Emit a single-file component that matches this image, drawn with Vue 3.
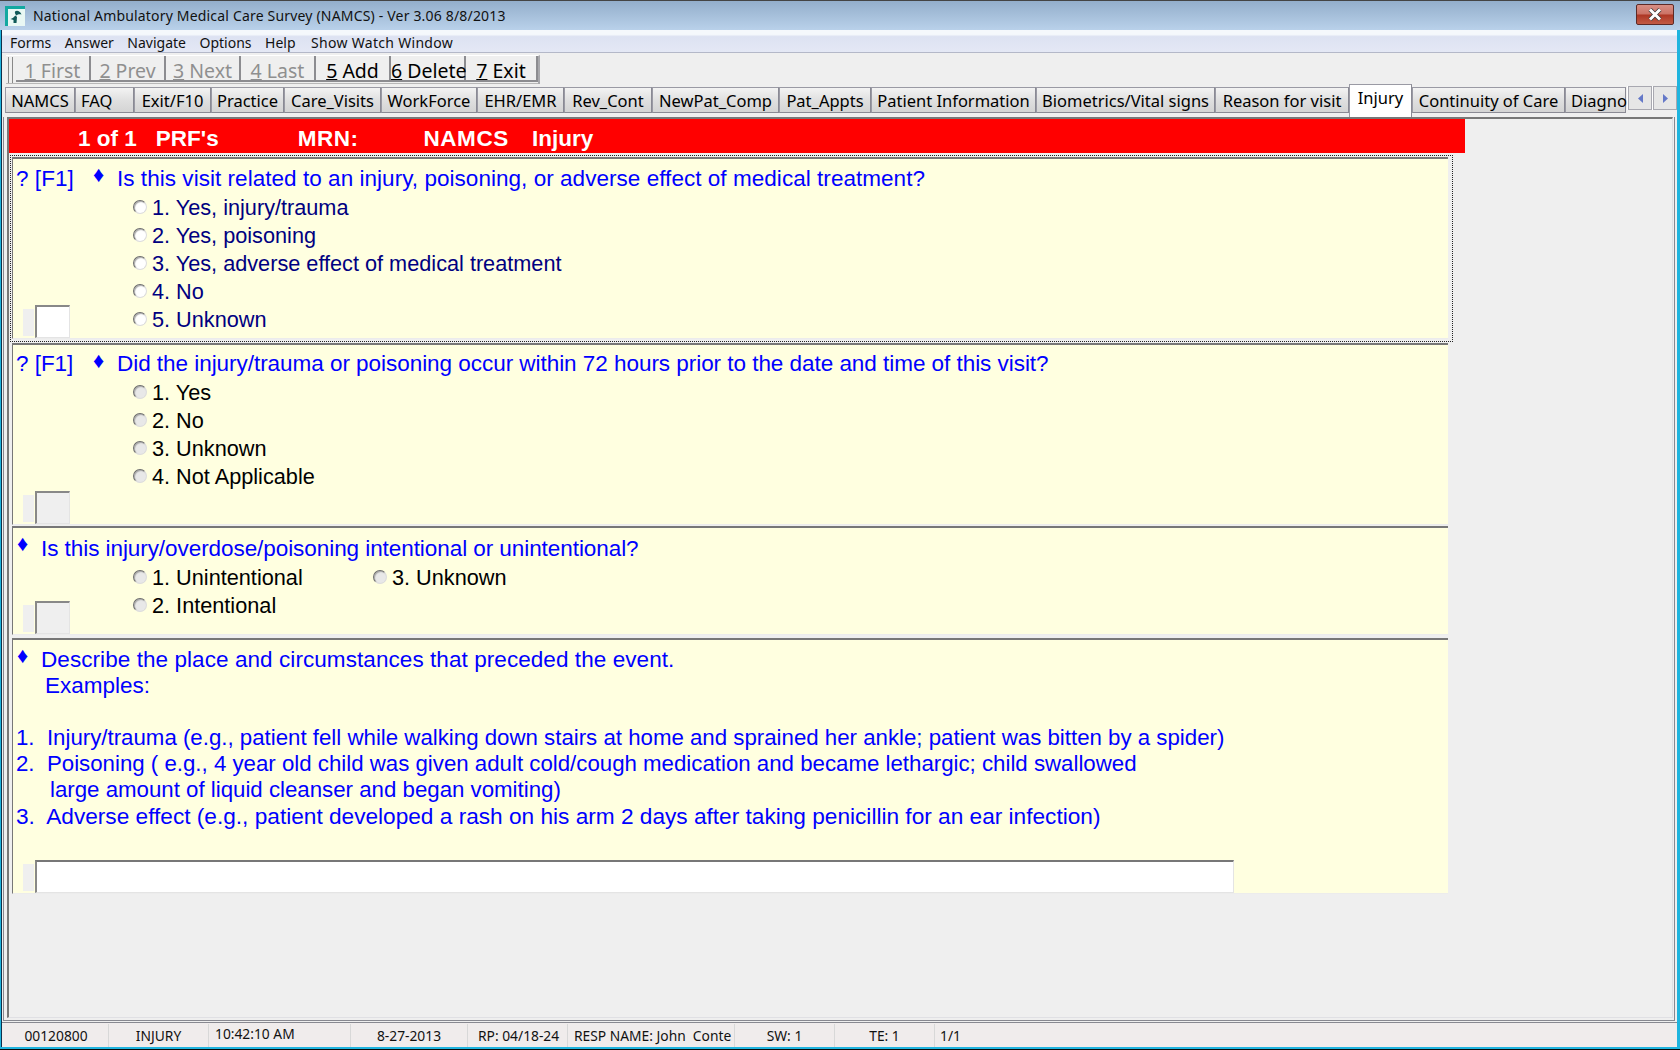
<script setup>
const menus = ['Forms', 'Answer', 'Navigate', 'Options', 'Help', 'Show Watch Window']
const tools = [
  { k: '1', t: ' First', off: true }, { k: '2', t: ' Prev', off: true },
  { k: '3', t: ' Next', off: true }, { k: '4', t: ' Last', off: true },
  { k: '5', t: ' Add' }, { k: '6', t: ' Delete', left: true }, { k: '7', t: ' Exit' },
]
const tabs = [
  ['NAMCS', 70], ['FAQ', 59], ['Exit/F10', 77], ['Practice', 73], ['Care_Visits', 97], ['WorkForce', 96],
  ['EHR/EMR', 87], ['Rev_Cont', 88], ['NewPat_Comp', 127], ['Pat_Appts', 92], ['Patient Information', 165],
  ['Biometrics/Vital signs', 179], ['Reason for visit', 134], ['Injury', 63], ['Continuity of Care', 153], ['Diagno', 61],
]
const status = [
  ['00120800', 105, 'c', 0], ['INJURY', 100, 'c', 0], ['10:42:10 AM', 142, 'up', 6], ['8-27-2013', 117, 'c', 0],
  ['RP: 04/18-24', 100, '', 10], ['RESP NAME: John  Conte', 167, '', 6], ['SW: 1', 100, 'c', 0], ['TE: 1', 100, 'c', 0], ['1/1', 200, '', 5],
]
const q1 = ['1. Yes, injury/trauma', '2. Yes, poisoning', '3. Yes, adverse effect of medical treatment', '4. No', '5. Unknown']
const q2 = ['1. Yes', '2. No', '3. Unknown', '4. Not Applicable']
</script>

<template>
  <div class="win">
    <header class="title">
      <svg class="logo" width="20" height="20" viewBox="0 0 20 20">
        <rect width="20" height="20" fill="#12a8a0" />
        <path d="M3 3H20V20H3Z" fill="#e9f8f4" />
        <path d="M10 5.500C12 4 15 5 16.500 8.500C14.500 8 12.500 8.500 11.500 9.500C10.500 8.500 9.500 7 10 5.500Z" fill="#0f5a58" />
        <path d="M10.500 9.500L12 11L11.500 17H8.500V14C7.500 13.800 6.500 13.500 5.500 13C7.500 12.500 9 11 10.500 9.500Z" fill="#0f5a58" />
      </svg>
      <span class="title-text">National Ambulatory Medical Care Survey (NAMCS) - Ver 3.06 8/8/2013</span>
      <button class="close">
        <svg width="16" height="13" viewBox="0 0 16 13"><path d="M3 1.500L13 11.500M13 1.500L3 11.500" stroke="#3a3a3a" stroke-width="4.400" /><path d="M3 1.500L13 11.500M13 1.500L3 11.500" stroke="#fff" stroke-width="3" /></svg>
      </button>
    </header>

    <div class="body">
      <nav class="menu"><span v-for="m in menus" :key="m">{{ m }}</span></nav>

      <div class="toolbar">
        <div class="tools">
          <span class="grip"></span>
          <span v-for="b in tools" :key="b.k" class="tool" :class="{ off: b.off, left: b.left }"><u>{{ b.k }}</u>{{ b.t }}</span>
        </div>
      </div>

      <div class="tabrow">
        <div class="tabs">
          <span v-for="t in tabs" :key="t[0]" class="tab" :class="{ active: t[0] === 'Injury', start: t[0] === 'FAQ' || t[0] === 'Diagno' }" :style="{ width: t[1] + 'px' }">{{ t[0] }}</span>
        </div>
        <div class="scrollers">
          <span class="scr"><svg width="7" height="9" viewBox="0 0 7 9"><path d="M6 0V9L1 4.500Z" fill="#6478c8" /></svg></span>
          <span class="scr"><svg width="7" height="9" viewBox="0 0 7 9"><path d="M1 0V9L6 4.500Z" fill="#6478c8" /></svg></span>
        </div>
      </div>

      <main class="panel">
        <div class="inner">
          <div class="red">
            <span class="r1">1 of 1</span><span class="r2">PRF's</span><span class="r3">MRN:</span><span class="r4">NAMCS</span><span class="r5">Injury</span>
          </div>

          <section class="focus">
            <div class="q q1">
              <div class="head"><span class="f1">? [F1]</span><span class="dia">♦</span><span class="qt">Is this visit related to an injury, poisoning, or adverse effect of medical treatment?</span></div>
              <div class="qbody">
                <div class="inp"><i></i><b></b></div>
                <div class="opts navy">
                  <label v-for="o in q1" :key="o"><em class="radio"></em>{{ o }}</label>
                </div>
              </div>
            </div>
          </section>

          <section class="q q2">
            <div class="head"><span class="f1">? [F1]</span><span class="dia">♦</span><span class="qt">Did the injury/trauma or poisoning occur within 72 hours prior to the date and time of this visit?</span></div>
            <div class="qbody">
              <div class="inp dis"><i></i><b></b></div>
              <div class="opts">
                <label v-for="o in q2" :key="o"><em class="radio dis"></em>{{ o }}</label>
              </div>
            </div>
          </section>

          <section class="q q3">
            <div class="head nof"><span class="dia">♦</span><span class="qt">Is this injury/overdose/poisoning intentional or unintentional?</span></div>
            <div class="qbody">
              <div class="inp dis"><i></i><b></b></div>
              <div class="opts two">
                <label><em class="radio dis"></em>1. Unintentional</label>
                <label><em class="radio dis"></em>3. Unknown</label>
                <label><em class="radio dis"></em>2. Intentional</label>
              </div>
            </div>
          </section>

          <section class="q q4">
            <div class="head nof"><span class="dia">♦</span><span class="qt">Describe the place and circumstances that preceded the event.</span></div>
            <div class="desc">
              <p class="ex">Examples:</p>
              <p class="n1">1.&nbsp; Injury/trauma (e.g., patient fell while walking down stairs at home and sprained her ankle; patient was bitten by a spider)</p>
              <p>2.&nbsp; Poisoning ( e.g., 4 year old child was given adult cold/cough medication and became lethargic; child swallowed</p>
              <p class="cont">large amount of liquid cleanser and began vomiting)</p>
              <p class="n3">3.&nbsp; Adverse effect (e.g., patient developed a rash on his arm 2 days after taking penicillin for an ear infection)</p>
            </div>
            <div class="wide"><i></i><b></b></div>
          </section>
        </div>
      </main>

      <footer class="status">
        <span v-for="s in status" :key="s[0]" class="cell" :class="s[2]" :style="{ width: s[1] + 'px', paddingLeft: s[3] + 'px' }">{{ s[0] }}</span>
      </footer>
    </div>
  </div>
</template>

<style>
html, body { margin: 0; background: #efefef; overflow: hidden; }
</style>

<style scoped>
.win { width: 1680px; height: 1050px; display: flex; flex-direction: column; box-sizing: border-box; background: #1fb4de; border-bottom: 1px solid #0a0a0a; overflow: hidden; font-family: "Noto Sans", sans-serif; color: #000; }
.title { height: 30px; flex: none; display: flex; align-items: center; padding: 0 6px 0 5px; border-top: 1px solid #444; box-sizing: border-box; background: linear-gradient(#93aecb, #b9d1ea); }
.logo { margin-right: 8px; flex: none; }
.title-text { font-size: 14px; color: #111; letter-spacing: .18px; }
.close { margin-left: auto; margin-top: -2px; width: 38px; height: 21px; padding: 0; border: 1px solid #5e2a26; border-radius: 2px; display: flex; align-items: center; justify-content: center; background: linear-gradient(#d88f84 0, #cb7265 48%, #ad3624 52%, #c25b45 100%); }
.body { flex: 1; min-height: 0; margin: 0 3px 2px 1px; display: flex; flex-direction: column; background: #efefef; border-left: 1px solid #10304a; }
.menu { height: 23px; flex: none; box-sizing: border-box; display: flex; gap: 13.500px; padding: 2px 0 0 8px; align-items: center; font-size: 14px; color: #111; border-bottom: 1px solid #b4b8c8; background: linear-gradient(#f5f8fc 0, #f5f8fc 20%, #dde2f2 30%, #e4e8f5 100%); }
.menu span:last-child { letter-spacing: .3px; margin-left: 2px; }
.toolbar { height: 31px; flex: none; display: flex; align-items: flex-end; padding-left: 4px; }
.tools { display: flex; height: 28px; align-items: stretch; border-right: 2px solid #a8a8ac; border-top: 1px solid #fff; box-shadow: inset 0 -1px 0 #b8b8b8; }
.grip { width: 3px; margin: 1px 3px 1px 2px; border-left: 1px solid #888; border-right: 1px solid #888; }
.tool { width: 75px; box-sizing: border-box; height: 26px; line-height: 29px; text-align: center; white-space: pre; font-size: 19.500px; color: #000; background: #efefef; border-right: 2px solid #8c8c90; border-bottom: 2px solid #8c8c90; }
.tool:last-child { width: 72px; }
.tool.off { color: #8f8f8f; }
.tool.left { text-align: left; }
.tabrow { height: 33px; flex: none; display: flex; position: relative; padding-left: 3px; }
.tabs { display: flex; align-items: flex-start; width: 1621px; height: 33px; }
.tab { height: 26px; margin-top: 3px; flex: none; box-sizing: border-box; line-height: 25px; text-align: center; font-size: 16.500px; color: #000; white-space: nowrap; border: 1px solid #9a9aa4; border-right: 1px solid #8a8a94; border-bottom: 1px solid #8a8a94; background: linear-gradient(#f3f3f3, #e0e0e0 50%, #d4d4d4); }
.tab.start { text-align: left; padding-left: 5px; }
.tab.active { height: 33px; margin-top: 0; border-bottom: 0; background: #fff; line-height: 26px; }
.scrollers { position: absolute; right: 0; top: 2px; display: flex; gap: 1px; padding-left: 1px; background: #fff; }
.scr { width: 24px; height: 24px; box-sizing: border-box; border: 1px solid #a8a8b0; background: #e6e6e6; display: flex; align-items: center; justify-content: center; }
.panel { flex: 1; min-height: 0; display: flex; margin: 0 2px 0 1px; box-sizing: border-box; border: 1px solid #888890; border-top: 0; padding: 0 1px 2px 3px; }
.inner { flex: 1; min-width: 0; box-sizing: border-box; border-top: 2px solid #777; border-left: 2px solid #777; border-right: 1px solid #e0e0e4; border-bottom: 1px solid #e0e0e4; }
.red { width: 1456px; height: 34px; background: #f00; color: #fff; font: bold 22.500px "Liberation Sans", sans-serif; line-height: 40px; white-space: pre; display: flex; }
.red span { display: block; }
.r1 { margin-left: 69px; } .r2 { margin-left: 19px; }
.r3 { margin-left: 79px; letter-spacing: .5px; }
.r4 { margin-left: 65px; letter-spacing: .6px; }
.r5 { margin-left: 23px; }
.focus { width: 1443px; margin: 2px 0 0 1px; padding: 2px 5px 3px 2px; box-sizing: border-box; outline: 1px dotted #222; outline-offset: -1px; }
.q { width: 1436px; box-sizing: border-box; background: #ffffe0; border-top: 2px solid #777; border-left: 1px solid #777; border-bottom: 1px solid #ececec; font-family: "Liberation Sans", sans-serif; font-size: 22.500px; }
.q1 { height: 182px; }
.q2 { height: 182px; margin: 1px 0 0 3px; }
.q3 { height: 109px; margin: 1px 0 0 3px; }
.q4 { height: 256px; margin: 3px 0 0 3px; display: flex; flex-direction: column; }
.head { display: flex; height: 36px; line-height: 38px; color: #00f; white-space: pre; padding-left: 3px; }
.q1 .head { line-height: 40px; letter-spacing: .04px; }
.q2 .head { letter-spacing: -.04px; }
.q3 .head { line-height: 41px; letter-spacing: -.065px; }
.q4 .head { line-height: 40px; letter-spacing: .07px; }
.f1 { width: 79px; flex: none; }
.dia { width: 24px; margin-left: -2px; flex: none; font-size: 22px; line-height: 32px; }
.nof .dia { width: 24px; margin-left: 1px; }
.qbody { display: flex; height: calc(100% - 36px); }
.inp { width: 120px; flex: none; align-self: flex-end; display: flex; align-items: flex-end; padding-left: 10px; box-sizing: border-box; }
.inp i { width: 11px; height: 27px; background: #efefef; margin-bottom: 2px; }
.inp b { width: 35px; height: 33px; box-sizing: border-box; margin-left: 1px; background: #fff; border-top: 2px solid #888; border-left: 2px solid #888; border-right: 1px solid #e4e4e4; border-bottom: 1px solid #e4e4e4; }
.inp.dis b { background: #efefef; }
.opts { display: grid; grid-auto-rows: 28px; line-height: 28px; color: #000; margin-top: -2px; font-size: 21.700px; }
.opts.navy { color: #000080; margin-top: -1px; }
.q3 .opts { margin-top: 0; }
.two { grid-template-columns: 240px 200px; }
label { display: flex; align-items: center; white-space: pre; }
.radio { width: 14px; height: 14px; flex: none; box-sizing: border-box; border-radius: 50%; background: #fff; border: 1px solid #6e6e6e; border-right-color: #dcdcdc; border-bottom-color: #dcdcdc; margin: -3px 5px 0 0; box-shadow: inset 1px 1px 1px #aaa; }
.radio.dis { background: #e8e8e8; }
.desc { color: #00f; padding: 0 0 0 3px; line-height: 26px; white-space: pre; margin-top: -3px; font-size: 22.250px; }
.desc p { margin: 0; }
.ex { padding-left: 29px; font-size: 22.500px; }
.n1 { margin-top: 26px !important; }
.cont { padding-left: 34px; }
.n3 { font-size: 22.650px; }
.wide { margin-top: auto; padding-left: 10px; display: flex; align-items: flex-end; }
.wide i { width: 11px; height: 27px; background: #efefef; margin-bottom: 2px; }
.wide b { width: 1199px; height: 33px; margin-left: 1px; box-sizing: border-box; background: #fff; border-top: 2px solid #777; border-left: 2px solid #888; border-right: 1px solid #e4e4e4; border-bottom: 1px solid #e4e4e4; }
.status { height: 25px; flex: none; margin-top: 1px; display: flex; background: #f0ecec; font-size: 13.800px; color: #111; border-top: 1px solid #888890; box-sizing: border-box; padding-left: 2px; }
.cell { box-sizing: border-box; height: 23px; line-height: 24px; margin-top: 1px; border-right: 1px solid #d8d8d8; white-space: pre; }
.cell.c { text-align: center; }
.cell.up { line-height: 20px; }
.cell:last-child { border-right: 0; }
</style>
